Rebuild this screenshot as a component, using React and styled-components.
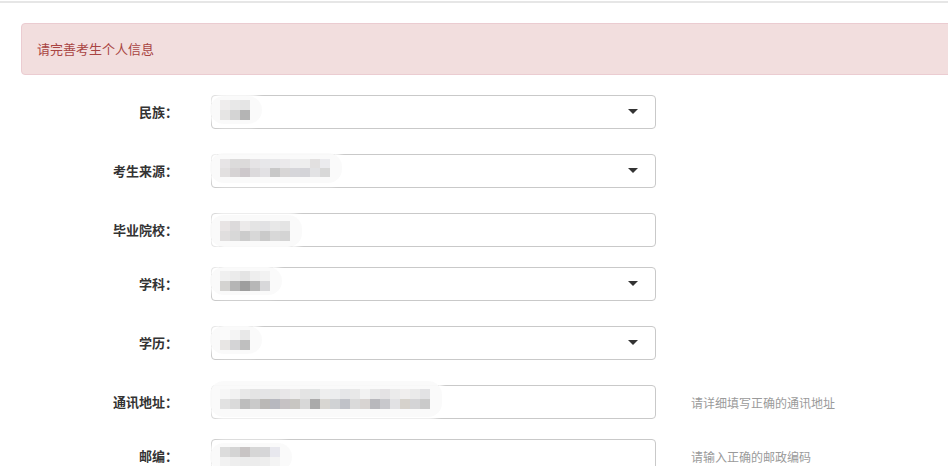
import React from "react";
import styled, { createGlobalStyle } from "styled-components";

const Global = createGlobalStyle`
  html, body { margin: 0; padding: 0; background: #fff; overflow: hidden; }
  body { font-family: "Liberation Sans", "Noto Sans CJK SC", sans-serif; color: #333; }
`;

const Page = styled.div`
  width: 948px;
  height: 466px;
  overflow: hidden;
  border-top: 2px solid #e6e6e6;
  margin-top: 1px;
  box-sizing: border-box;
`;

const Container = styled.div`
  width: 1140px;
  padding: 20px 0 0 21px;
`;

const Alert = styled.div`
  box-sizing: border-box;
  height: 52px;
  padding: 15px 15px;
  background: #f2dede;
  border: 1px solid #ebccd1;
  border-radius: 4px;
  color: #a94442;
  font-size: 13px;
  line-height: 20px;
  font-family: "Noto Sans CJK SC", sans-serif;
`;

const Form = styled.div`
  margin-top: 20px;
  display: flex;
  flex-direction: column;
`;

const Group = styled.div`
  display: grid;
  grid-template-columns: 157px 445px auto;
  column-gap: 33px;
  align-items: center;
  height: 34px;
  margin-bottom: ${(p) => (p.$select ? 25 : 20)}px;
`;

const Label = styled.label`
  text-align: right;
  font-weight: bold;
  font-size: 13px;
  font-family: "Noto Sans CJK SC", sans-serif;
  color: #333;
  white-space: nowrap;
  margin-top: -1px;
`;

const Box = styled.div`
  position: relative;
  box-sizing: border-box;
  height: 34px;
  border: 1px solid #c9c9c9;
  border-radius: 4px;
  background: #fff;
`;

const Arrow = styled.span`
  position: absolute;
  right: 17px;
  top: 13px;
  width: 0;
  height: 0;
  border-left: 5px solid transparent;
  border-right: 5px solid transparent;
  border-top: 5px solid #333;
`;

const Help = styled.span`
  margin-left: 2px;
  font-size: 12px;
  color: #9a9a9a;
  font-family: "Noto Sans CJK SC", sans-serif;
  white-space: nowrap;
`;

const Halo = styled.div`
  position: absolute;
  left: -2px;
  top: ${(p) => p.$top}px;
  padding: ${(p) => p.$pad}px 12px ${(p) => p.$pad}px 10px;
  background: rgba(250, 250, 250, 0.96);
  border-radius: 14px;
  box-shadow: 0 0 4px 3px rgba(255, 255, 255, 0.9);
`;

const Cells = styled.div`
  display: grid;
  grid-template-columns: repeat(${(p) => p.$cols}, 10px);
  grid-auto-rows: ${(p) => p.$h}px;
`;

const Cell = styled.span`
  display: block;
`;

function Mosaic({ rows, top = 1, pad = 4, h = 10 }) {
  const cols = rows[0].length;
  return (
    <Halo $top={top} $pad={pad}>
      <Cells $cols={cols} $h={h}>
        {rows.flat().map((c, i) => (
          <Cell key={i} style={{ background: c }} />
        ))}
      </Cells>
    </Halo>
  );
}

const m1 = [
  ["#efeded", "#e8e8e8", "#e5e5e5"],
  ["#e6e5e4", "#d4d4d4", "#b4b4b4"],
];
const m2 = [
  ["#e7e5e6", "#dcdbdb", "#dcdada", "#e6e4e6", "#e7e7ea", "#e8e8ea", "#ebe9eb", "#eeeeef", "#eeeeee", "#e2e0e0", "#ebebee"],
  ["#e2e0e0", "#d6d3d4", "#cdc8cb", "#dcdadc", "#e2e1e4", "#c8c8c8", "#d8d6d6", "#d6d6da", "#d4d4d8", "#e2e2e4", "#d8d8d8"],
];
const m3 = [
  ["#e8e4e4", "#dcdadb", "#eceaea", "#e4e4e4", "#e2e2e4", "#e8e8e8", "#e4e4e4"],
  ["#e0dede", "#d8d8d8", "#cccccc", "#d8d8d8", "#cacaca", "#d8d8d8", "#d4d4d4"],
];
const m4 = [
  ["#f0f0f0", "#ebebeb", "#e4e4e4", "#eeeeee", "#f2f2f2"],
  ["#d4d3d1", "#b5b5b5", "#9e9e9e", "#b7b7b7", "#d8d8da"],
];
const m5 = [
  ["#fbfbfb", "#f4f4f4", "#e8e8e8"],
  ["#e8e6e4", "#d4d4d6", "#bfbfbf"],
];
const m6 = [
  ["#f7f7f7", "#f2f2f2", "#e8e8e8", "#e4e4e4", "#e4e4e6", "#e4e4e4", "#e8e6e8", "#ecebeb", "#e4e4e4", "#e2e4e4", "#eeeeee", "#ecedee", "#e5e6e8", "#e8e8e8", "#f2f2f2", "#e8e8e8", "#e4e2e4", "#ebebeb", "#f0eeee", "#eaeaea", "#e2e2e4"],
  ["#e2e2e2", "#dadada", "#bdbdbd", "#cacaca", "#bab8b6", "#b7b8bf", "#c6c2c4", "#c8c6c2", "#d8d8d8", "#aaaaaa", "#d8d6d2", "#d0d2d4", "#c0c2c8", "#dadada", "#d8d4d2", "#b8b8bc", "#c8c8cc", "#e2e2e4", "#d6d2cc", "#d4d4d6", "#cacaca"],
];
const m7 = [
  ["#dcdcdc", "#d4d4d4", "#c8c4c4", "#d6d6d6", "#d6d6d8", "#e8e8ee"],
  ["#f2f2f2", "#eeeeee", "#ececec", "#ececec", "#eeeeee", "#f4f4f4"],
];

const fields = [
  { label: "民族：", select: true, mosaic: m1, top: 0 },
  { label: "考生来源：", select: true, mosaic: m2, top: -2, pad: 6, h: 9 },
  { label: "毕业院校：", select: false, mosaic: m3, top: 1, pad: 6 },
  { label: "学科：", select: true, mosaic: m4, top: -1 },
  { label: "学历：", select: true, mosaic: m5, top: -1 },
  { label: "通讯地址：", select: false, mosaic: m6, top: -5, pad: 8, help: "请详细填写正确的通讯地址" },
  { label: "邮编：", select: false, mosaic: m7, top: 3, help: "请输入正确的邮政编码" },
];

export default function App() {
  return (
    <>
      <Global />
      <Page>
        <Container>
          <Alert>请完善考生个人信息</Alert>
          <Form>
            {fields.map((f) => (
              <Group key={f.label} $select={f.select}>
                <Label>{f.label}</Label>
                <Box>
                  <Mosaic rows={f.mosaic} top={f.top} pad={f.pad ?? 4} h={f.h ?? 10} />
                  {f.select && <Arrow />}
                </Box>
                {f.help ? <Help>{f.help}</Help> : <span />}
              </Group>
            ))}
          </Form>
        </Container>
      </Page>
    </>
  );
}
